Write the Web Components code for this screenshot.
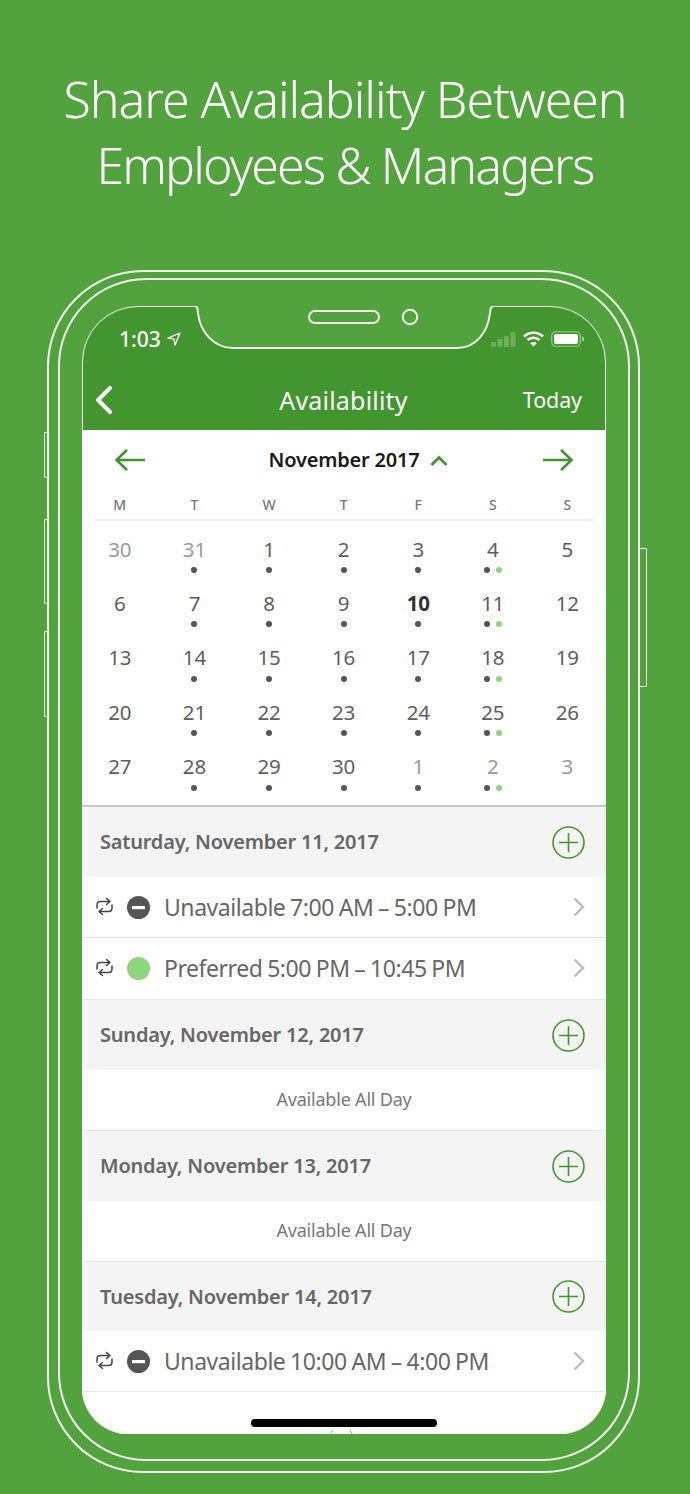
<!DOCTYPE html>
<html><head><meta charset="utf-8">
<style>
html,body{margin:0;padding:0;background:#52a23e}
body{width:690px;height:1494px;overflow:hidden;font-family:"Noto Sans",sans-serif}
</style></head><body>
<x-promo>
  <span slot="title">Share Availability Between<br><span style="letter-spacing:-1.85px">Employees &amp; Managers</span></span>
  <x-phone>
    <x-navbar></x-navbar>
    <x-calendar></x-calendar>
    <x-agenda>
      <x-day-header>Saturday, November 11, 2017</x-day-header>
      <x-slot-row kind="off" label="Unavailable 7:00 AM – 5:00 PM"></x-slot-row>
      <x-slot-row kind="pref" label="Preferred 5:00 PM – 10:45 PM" style="height:62px;padding-bottom:1px"></x-slot-row>
      <x-day-header>Sunday, November 12, 2017</x-day-header>
      <x-all-day></x-all-day>
      <x-day-header>Monday, November 13, 2017</x-day-header>
      <x-all-day></x-all-day>
      <x-day-header style="height:69px">Tuesday, November 14, 2017</x-day-header>
      <x-slot-row kind="off" label="Unavailable 10:00 AM – 4:00 PM"></x-slot-row>
    </x-agenda>
  </x-phone>
</x-promo>
<script>
function def(name,html){
  customElements.define(name,class extends HTMLElement{
    constructor(){super();this.attachShadow({mode:'open'}).innerHTML=typeof html==='function'?html(this):html;}
  });
}
const F='"Noto Sans",sans-serif';
def('x-promo',`<style>
:host{display:block;width:690px;height:1494px;box-sizing:border-box;padding-top:66px;color:#fff}
h1{margin:0 0 72px;text-align:center;font:300 50px/66px ${F};letter-spacing:-1.05px}
</style><h1><slot name="title"></slot></h1><slot></slot>`);
def('x-phone',`<style>
:host{display:block;box-sizing:border-box;position:relative;width:593px;height:1203px;margin-left:47px;border:2px solid #f2f8ef;border-radius:96px;padding:6px 8px 10px 9px}
.mid{box-sizing:border-box;height:100%;border:2px solid #f2f8ef;border-radius:88px;padding:26px 22px 25px 22px}
.screen{position:relative;height:1128px;width:524px;background:#fff;border-radius:56px 56px 46px 46px;overflow:hidden;display:flex;flex-direction:column}
.btn{position:absolute;width:5px;border:1.500px solid #f2f8ef;border-right:0;border-radius:2px 0 0 2px;box-sizing:border-box;left:-5px}
.btn.r{left:auto;right:-8.500px;width:7px;border-right:1.500px solid #f2f8ef;border-left:0;border-radius:0 2px 2px 0}
.notch{position:absolute;left:0;top:0;width:524px;height:60px}
.bar{position:absolute;left:169px;bottom:7px;width:186px;height:8px;border-radius:4px;background:#000}
.sp{position:absolute;left:248px;bottom:0;width:24px;height:4px}
.edge{position:absolute;inset:0;border-radius:56px 56px 46px 46px;border:1.500px solid #f2f8ef;clip-path:inset(0 0 1004px 0);pointer-events:none}
</style>
<div class="btn" style="top:160px;height:46px"></div>
<div class="btn" style="top:247px;height:85px"></div>
<div class="btn" style="top:359px;height:86px"></div>
<div class="btn r" style="top:276px;height:139px"></div>
<div class="mid"><div class="screen"><slot></slot>
<div class="edge"></div>
<svg class="notch" viewBox="0 0 524 60"><path d="M106 -3H110Q116 -1 116 7C118 26 132 42 151 42H375C394 42 406 26 408 7Q408 0 414 -3Z" fill="#52a23e" stroke="#f2f8ef" stroke-width="2"/>
<rect x="227" y="5" width="70" height="12" rx="6" fill="none" stroke="#f2f8ef" stroke-width="2"/><circle cx="328" cy="11" r="7.200" fill="none" stroke="#f2f8ef" stroke-width="2"/></svg>
<svg class="sp" viewBox="0 0 24 4"><path d="M1 3L3 0M20 0L22 4" stroke="#8fd17c" stroke-width="1.200"/></svg>
<div class="bar"></div></div></div>`);
def('x-navbar',`<style>
:host{display:block;box-sizing:border-box;height:124px;background:#43952f;color:#fff;position:relative;flex:none}
.status{display:flex;justify-content:space-between;align-items:center;height:24px;padding:21px 22px 0 37px}
.time{font:500 21px/24px ${F};display:flex;align-items:center;gap:6px}
.icons{display:flex;align-items:center;gap:7px}
.nav{display:grid;grid-template-columns:1fr auto 1fr;align-items:center;height:50px;margin-top:24px;padding:0 24px 0 23px}
.back{margin-left:-12px}
.title{font:400 25px/30px ${F};letter-spacing:.2px}
.today{justify-self:end;font:400 21.500px/30px ${F};letter-spacing:-.1px}
svg{display:block}
</style>
<div class="status"><div class="time">1:03<svg width="14" height="14" viewBox="0 0 14 14"><path d="M13 1L1 6.200L7 7.200L8 13Z" fill="none" stroke="#fff" stroke-width="1.300" stroke-linejoin="round"/></svg></div>
<div class="icons">
<svg width="25" height="15" viewBox="0 0 25 15" fill="#6db05a"><rect x="0" y="10" width="5" height="5" rx="1"/><rect x="6.500" y="7" width="5" height="8" rx="1"/><rect x="13" y="4" width="5" height="11" rx="1"/><rect x="19.500" y="0" width="5" height="15" rx="1"/></svg>
<svg width="21" height="16" viewBox="0 0 21 16" fill="none" stroke="#fff" stroke-width="2.600"><path d="M1 5.500C6.500 .5 14.500 .5 20 5.500M4.500 9C8 6 13 6 16.500 9"/><path d="M10.500 15.500L7.300 12.200C9 10.500 12 10.500 13.700 12.200Z" fill="#fff" stroke="none"/></svg>
<svg width="33" height="16" viewBox="0 0 33 16"><rect x=".75" y=".75" width="28.500" height="14.500" rx="4" fill="none" stroke="#9ccb8f" stroke-width="1.200"/><rect x="3" y="3" width="24" height="10" rx="2" fill="#fff"/><path d="M31 5.500a2.500 2.500 0 0 1 0 5z" fill="#9ccb8f"/></svg>
</div></div>
<div class="nav"><svg class="back" width="20" height="30" viewBox="0 0 20 30"><path d="M17 3L5 15L17 27" fill="none" stroke="#fff" stroke-width="4" stroke-linecap="round" stroke-linejoin="round"/></svg><div class="title">Availability</div><div class="today">Today</div></div>`);
def('x-calendar',`<style>
:host{display:block;background:#fff;flex:none;height:377px;box-sizing:border-box;border-bottom:2px solid #c8c8c8;color:#555}
.month{display:flex;align-items:center;justify-content:space-between;height:60px;padding:0 32px;box-sizing:border-box}
.m{position:relative;font:600 20px/26px ${F};color:#1a1a1a;letter-spacing:-.2px}
.m svg{position:absolute;left:calc(100% + 11px);top:8px}
.wk,.grid{display:grid;grid-template-columns:repeat(7,74.6px);text-align:center;margin-left:.5px}
.wk{height:30px;font:500 14px/30px ${F};color:#777;position:relative}
.wk:after{content:"";position:absolute;left:12px;right:12px;bottom:-1px;border-bottom:2px solid #eee}
.grid{grid-auto-rows:54.400px}
.c{display:flex;flex-direction:column;align-items:center;font:400 20.500px/26px ${F};padding-top:15.500px;box-sizing:border-box;letter-spacing:-.2px;color:#5e5e5e}
.c.o{color:#999}.c.t{font-weight:700;color:#333}
.d{display:flex;gap:6px;height:6px;margin-top:5.500px}
.d i{width:6px;height:6px;border-radius:50%;background:#555}.d i.g{background:#8ed67e}
</style>
<div class="month"><svg width="32" height="24" viewBox="0 0 32 24" fill="none" stroke="#43952f" stroke-width="2.600"><path d="M2 12H31M13 2L2.500 12L13 22"/></svg>
<div class="m">November 2017<svg width="18" height="11" viewBox="0 0 18 11" fill="none" stroke="#43952f" stroke-width="2.800"><path d="M1.500 10L9 2.500L16.500 10"/></svg></div>
<svg width="32" height="24" viewBox="0 0 32 24" fill="none" stroke="#43952f" stroke-width="2.600"><path d="M1 12H30M19 2L29.500 12L19 22"/></svg></div>
<div class="wk">${'MTWTFSS'.split('').map(x=>`<span>${x}</span>`).join('')}</div>
<div class="grid">${(()=>{const ds=[30,31,1,2,3,4,5,6,7,8,9,10,11,12,13,14,15,16,17,18,19,20,21,22,23,24,25,26,27,28,29,30,1,2,3];
return ds.map((n,i)=>{const o=i<2||i>31;const col=i%7;const dots=col==6||col==0?'':col==5?'<i></i><i class="g"></i>':'<i></i>';
return `<div class="c${o?' o':''}${i==11?' t':''}">${n}<div class="d">${dots}</div></div>`}).join('')})()}</div>`);
def('x-agenda',`<style>:host{display:block;flex:1;background:#fff}</style><slot></slot>`);
def('x-day-header',`<style>
:host{display:flex;align-items:center;justify-content:space-between;box-sizing:border-box;height:70px;padding:0 21px 0 18px;background:#f4f4f4;font:600 20px/26px ${F};color:#666;letter-spacing:-.2px}
</style><slot></slot><svg width="33" height="33" viewBox="0 0 33 33" fill="none" stroke="#43952f" stroke-width="1.600"><circle cx="16.500" cy="16.500" r="15.500"/><path d="M16.500 7V26M7 16.500H26"/></svg>`);
def('x-slot-row',h=>`<style>
:host{display:flex;align-items:center;box-sizing:border-box;height:61px;padding:0 21px 0 13px;background:#fff;border-bottom:1px solid #e6e6e6;font:400 23px/30px ${F};color:#666;letter-spacing:-.45px;word-spacing:-.8px}
.s{width:23px;height:23px;margin:0 14px 0 13px;flex:none}
.l{flex:1}
.r{margin-top:-1px}
</style>
<svg class="r" width="19" height="19" viewBox="0 0 19 19" fill="none" stroke="#444" stroke-width="1.500" stroke-linecap="round" stroke-linejoin="round"><path d="M2 11V8C2 6 3.500 4.500 5.500 4.500H15M11.500 1.500L15 4.500L11.500 7.500M17 8V11C17 13 15.500 14.500 13.500 14.500H4M7.500 11.500L4 14.500L7.500 17.500"/></svg>
${h.getAttribute('kind')==='off'?'<svg class="s" viewBox="0 0 23 23"><circle cx="11.500" cy="11.500" r="11.500" fill="#555"/><rect x="5" y="10" width="13" height="3.200" fill="#fff"/></svg>':'<svg class="s" viewBox="0 0 23 23"><circle cx="11.500" cy="11.500" r="11.500" fill="#8ed67e"/></svg>'}
<span class="l">${h.getAttribute('label')}</span>
<svg width="12" height="20" viewBox="0 0 12 20" fill="none" stroke="#bbb" stroke-width="2.400"><path d="M1.500 1.500L10 10L1.500 18.500"/></svg>`);
def('x-all-day',`<style>:host{display:block;height:61px;box-sizing:border-box;text-align:center;background:#fff;border-bottom:1px solid #e6e6e6;font:400 18px/58px ${F};color:#777;letter-spacing:-.2px}</style>Available All Day`);
</script></body></html>
